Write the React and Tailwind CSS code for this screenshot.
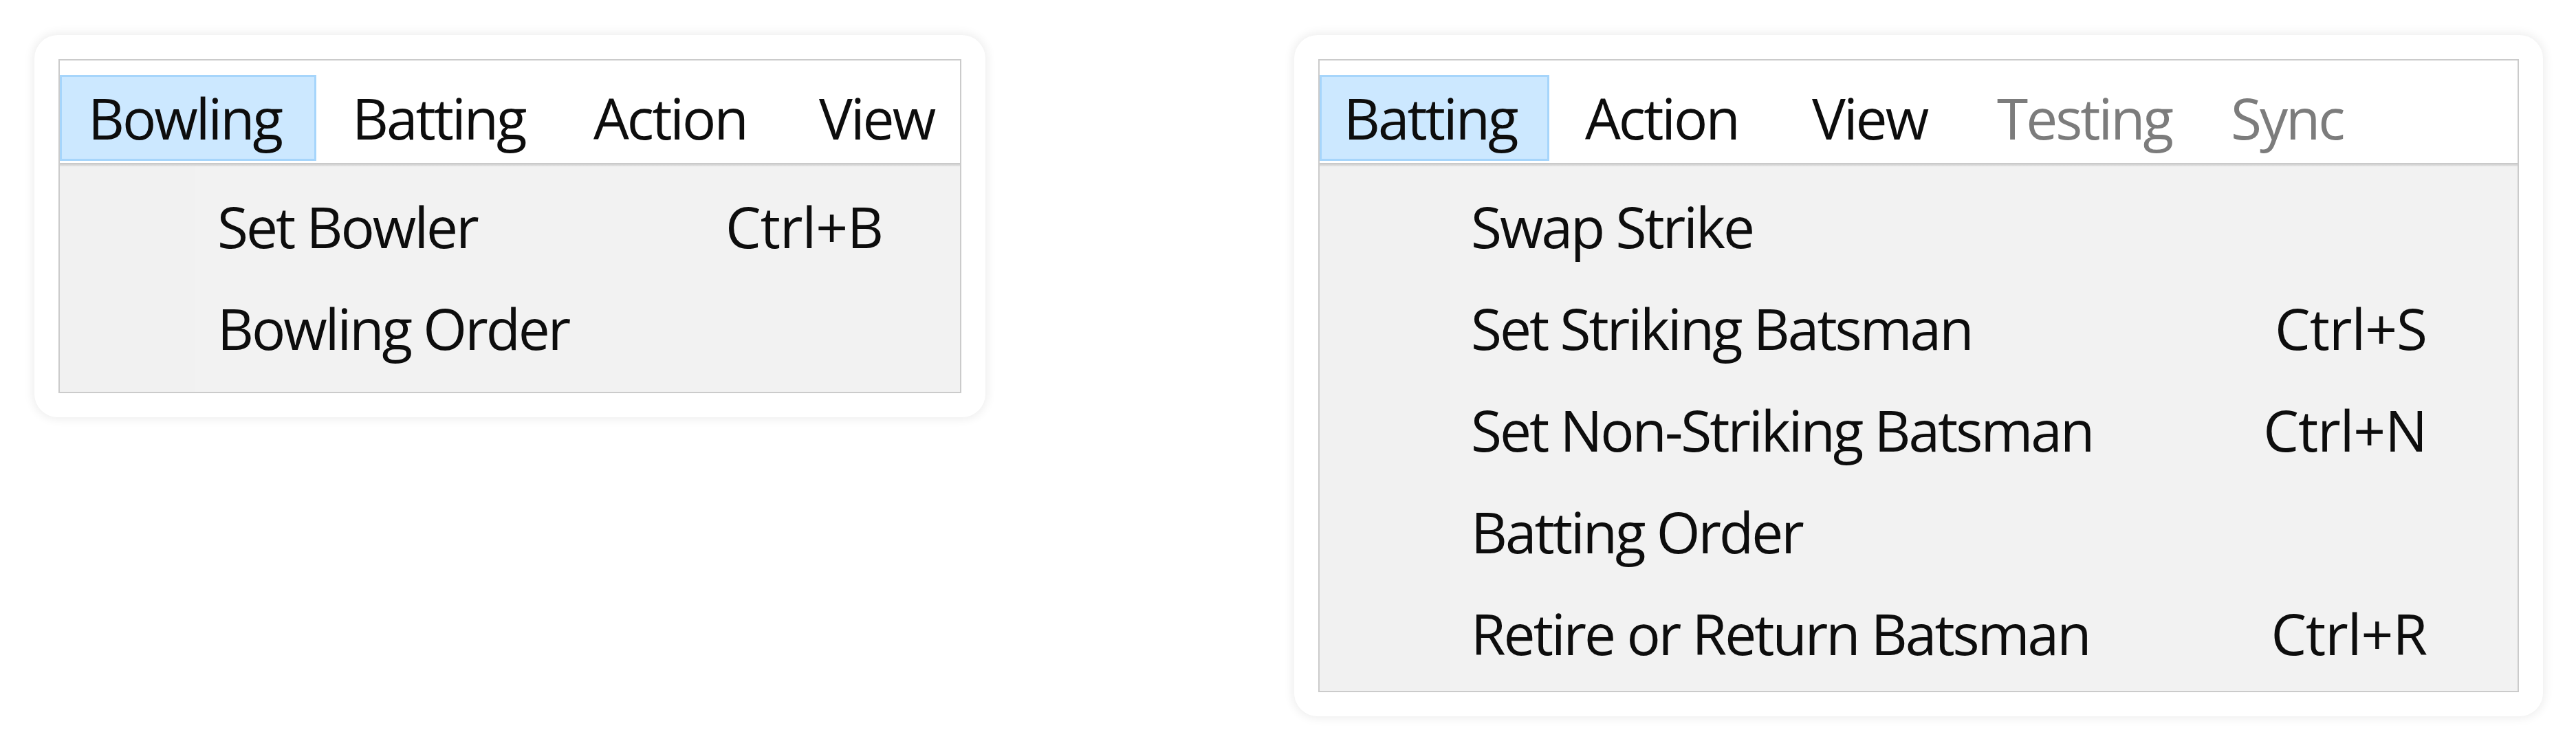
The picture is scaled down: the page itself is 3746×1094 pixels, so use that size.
import React from "react";

// Two Windows-style menus, each sitting on a soft rounded card
const bowlingMenu = {
  width: "w-[1313px]",
  bodyPad: "pb-[19px]",
  textPad: "pl-[229px]",
  keyPad: "pr-[112px]",
  gutter: "w-[196px]",
  bar: [
    { label: "Bowling", cls: "w-[373px] pl-[41px]", active: true },
    { label: "Batting", cls: "w-[355px] pl-[52px]" },
    { label: "Action", cls: "w-[330px] pl-[48px]" },
    { label: "View", cls: "pl-[46px]" },
  ],
  items: [
    { label: "Set Bowler", key: "Ctrl+B" },
    { label: "Bowling Order" },
  ],
};

const battingMenu = {
  width: "w-[1746px]",
  bodyPad: "pb-[10px]",
  textPad: "pl-[220px]",
  keyPad: "pr-[132px]",
  gutter: "w-[190px]",
  bar: [
    { label: "Batting", cls: "w-[334px] pl-[35px]", active: true },
    { label: "Action", cls: "w-[333px] pl-[52px]" },
    { label: "View", cls: "w-[270px] pl-[49px]" },
    { label: "Testing", cls: "w-[340px] pl-[48px]", disabled: true },
    { label: "Sync", cls: "pl-[48px]", disabled: true },
  ],
  items: [
    { label: "Swap Strike" },
    { label: "Set Striking Batsman", key: "Ctrl+S" },
    { label: "Set Non-Striking Batsman", key: "Ctrl+N" },
    { label: "Batting Order" },
    { label: "Retire or Return Batsman", key: "Ctrl+R" },
  ],
};

function MenuBar({ bar }) {
  return (
    <div className="bg-white pt-[21px] pb-[3px]">
      <div className="flex h-[125px] items-stretch">
        {bar.map((b) => (
          <div
            key={b.label}
            className={`${b.cls} flex items-center whitespace-nowrap border-[3px] ${
              b.active
                ? "bg-[#cce8ff] border-[#a6d5fb]"
                : "border-transparent"
            } ${b.disabled ? "text-[#7c7c7c]" : "text-[#0d0d0d]"}`}
          >
            <span className="-ml-[3px] leading-[125px]">{b.label}</span>
          </div>
        ))}
      </div>
    </div>
  );
}

function MenuPanel({ menu }) {
  return (
    <div className="rounded-[34px] bg-white p-[35px] shadow-[0_0_14px_3px_rgba(0,0,0,0.07)]">
      <div
        className={`${menu.width} border-2 border-[#cbcbcb] text-[82px] font-[500] tracking-[-3px] font-['Open_Sans','Noto_Sans',sans-serif]`}
      >
        <MenuBar bar={menu.bar} />
        <div className="h-[5px] bg-gradient-to-b from-[#c4c4c4] to-[#e6e6e6]" />
        <div className={`relative bg-[#f2f2f2] pt-[13px] ${menu.bodyPad}`}>
          {/* icon gutter */}
          <div className={`absolute left-0 top-0 bottom-0 ${menu.gutter} bg-[#f1f1f1]`} />
          {menu.items.map((it) => (
            <div
              key={it.label}
              className={`relative flex h-[148px] items-center justify-between leading-[148px] text-[#0d0d0d] ${menu.textPad} ${menu.keyPad}`}
            >
              <span className="whitespace-nowrap">{it.label}</span>
              {it.key && <span className="whitespace-nowrap tracking-[-1px]">{it.key}</span>}
            </div>
          ))}
        </div>
      </div>
    </div>
  );
}

export default function App() {
  return (
    <div className="flex min-h-[1094px] items-start justify-between bg-white pl-[50px] pr-[48px] pt-[51px]">
      <MenuPanel menu={bowlingMenu} />
      <MenuPanel menu={battingMenu} />
    </div>
  );
}
